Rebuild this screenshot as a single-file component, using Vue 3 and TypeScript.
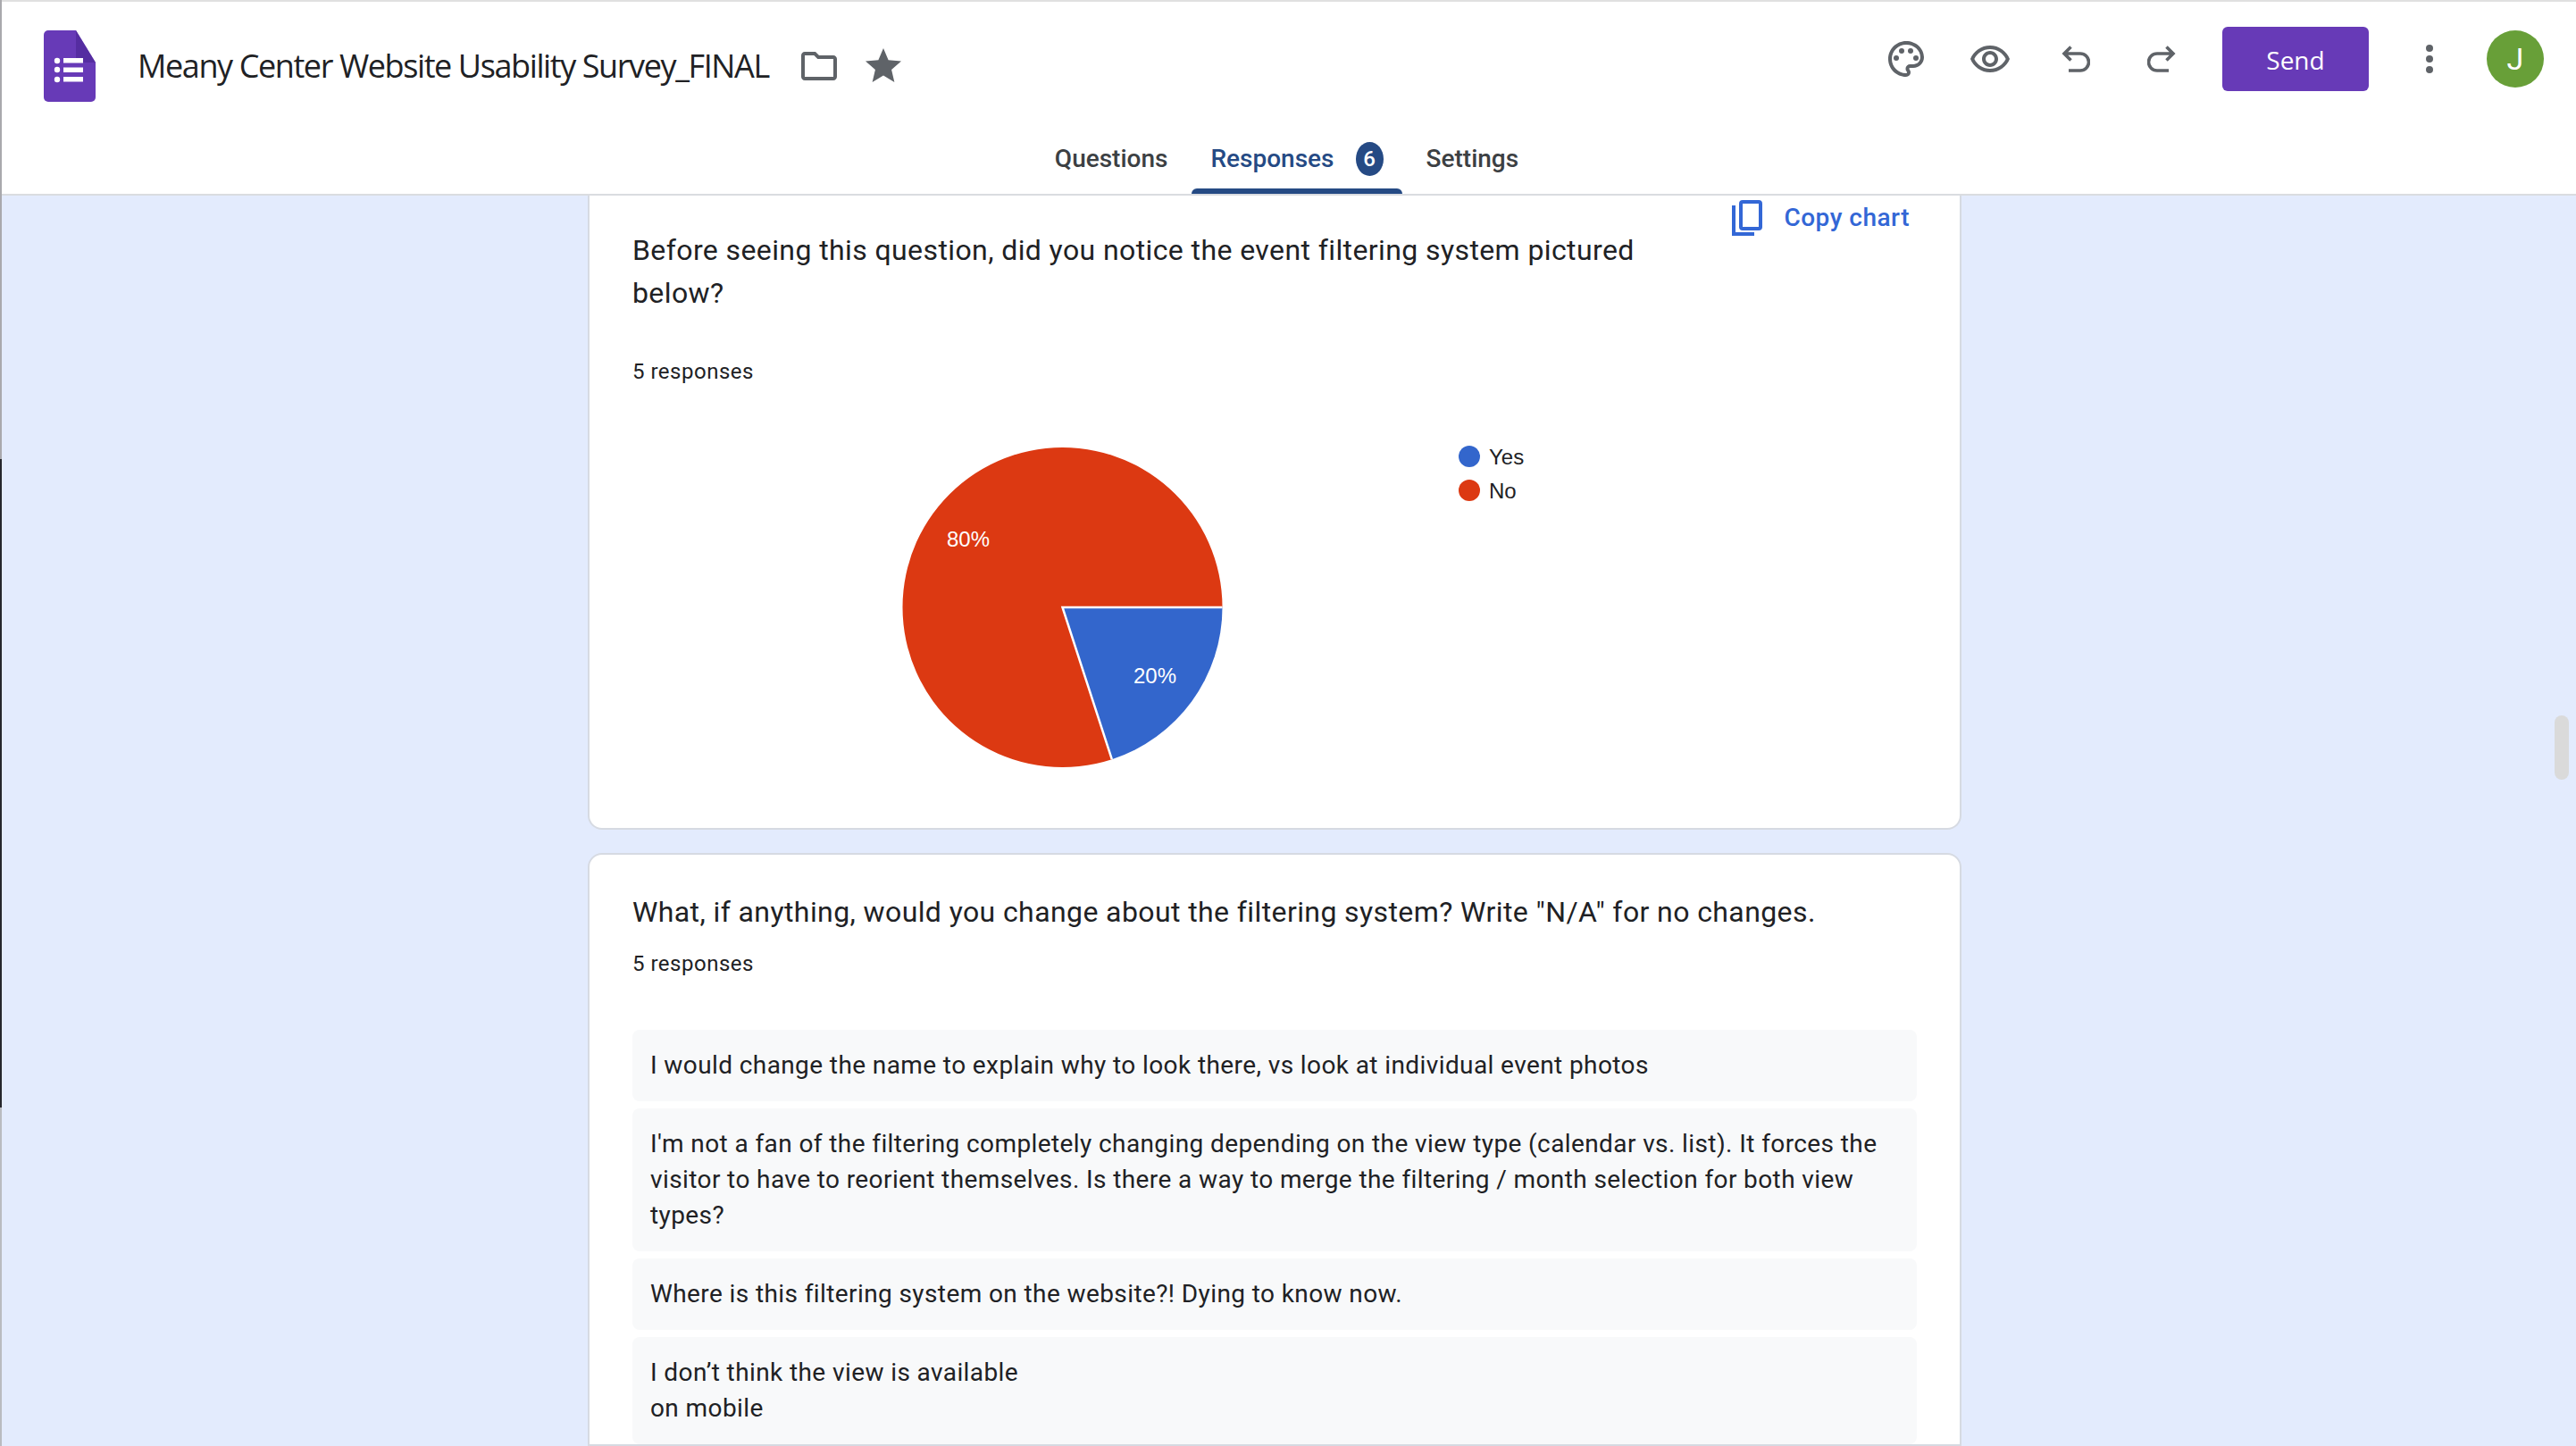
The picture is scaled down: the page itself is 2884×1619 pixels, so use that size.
<script setup lang="ts">
const answers: string[] = [
  'I would change the name to explain why to look there, vs look at individual event photos',
  "I'm not a fan of the filtering completely changing depending on the view type (calendar vs. list). It forces the visitor to have to reorient themselves. Is there a way to merge the filtering / month selection for both view types?",
  'Where is this filtering system on the website?! Dying to know now.',
  'I don’t think the view is available\non mobile',
]
</script>

<template>
  <div class="page">
    <header class="header">
      <div class="top">
        <div class="brand">
          <svg class="logo" viewBox="0 0 58 80">
            <path d="M5 0H36L58 36V75a5 5 0 0 1-5 5H5a5 5 0 0 1-5-5V5a5 5 0 0 1 5-5z" fill="#673ab7" />
            <path d="M36 0L58 36H41a5 5 0 0 1-5-5z" fill="#4f2a99" opacity=".75" />
            <circle cx="15" cy="34" r="3.2" fill="#fff" />
            <circle cx="15" cy="44" r="3.2" fill="#fff" />
            <circle cx="15" cy="55" r="3.2" fill="#fff" />
            <rect x="22" y="31" width="22" height="5.5" fill="#fff" />
            <rect x="22" y="41.5" width="22" height="5.5" fill="#fff" />
            <rect x="22" y="52" width="22" height="5.5" fill="#fff" />
          </svg>
          <h1 class="title">Meany Center Website Usability Survey_FINAL</h1>
          <svg class="folder" viewBox="0 0 24 24" fill="#5f6368">
            <path d="M9.17 6l2 2H20v10H4V6h5.17M10 4H4c-1.1 0-2 .9-2 2v12c0 1.1.9 2 2 2h16c1.1 0 2-.9 2-2V8c0-1.1-.9-2-2-2h-8l-2-2z" />
          </svg>
          <svg class="star" viewBox="0 0 24 24" fill="#5f6368">
            <path d="M12 17.27L18.18 21l-1.64-7.03L22 9.24l-7.19-.61L12 2 9.19 8.63 2 9.24l5.46 4.73L5.82 21z" />
          </svg>
        </div>
        <div class="actions">
          <svg class="ico palette" viewBox="0 0 24 24" fill="#5f6368">
            <path d="M12 22C6.49 22 2 17.51 2 12S6.49 2 12 2s10 4.04 10 9c0 3.31-2.69 6-6 6h-1.77c-.28 0-.5.22-.5.5 0 .12.05.23.13.33.41.47.64 1.06.64 1.67A2.5 2.5 0 0 1 12 22zm0-18c-4.41 0-8 3.59-8 8s3.59 8 8 8c.28 0 .5-.22.5-.5a.54.54 0 0 0-.14-.35c-.41-.46-.63-1.05-.63-1.65a2.5 2.5 0 0 1 2.5-2.5H16c2.21 0 4-1.79 4-4 0-3.86-3.59-7-8-7z" />
            <circle cx="6.5" cy="11.5" r="1.5" />
            <circle cx="9.5" cy="7.5" r="1.5" />
            <circle cx="14.5" cy="7.5" r="1.5" />
            <circle cx="17.5" cy="11.5" r="1.5" />
          </svg>
          <svg class="ico eye" viewBox="0 0 24 24" fill="#5f6368">
            <path d="M12 6.5c3.79 0 7.17 2.13 8.82 5.5-1.65 3.37-5.02 5.5-8.82 5.5S4.83 15.37 3.18 12C4.83 8.63 8.21 6.5 12 6.5m0-2C7 4.5 2.73 7.61 1 12c1.73 4.39 6 7.5 11 7.5s9.27-3.11 11-7.5c-1.73-4.39-6-7.5-11-7.5zm0 5a2.5 2.5 0 0 1 0 5 2.5 2.5 0 0 1 0-5m0-2c-2.48 0-4.5 2.02-4.5 4.5s2.02 4.5 4.5 4.5 4.5-2.02 4.5-4.5-2.02-4.5-4.5-4.5z" />
          </svg>
          <svg class="ico undo" viewBox="0 0 32 30" fill="none" stroke="#5f6368" stroke-width="3.6">
            <path d="M10.5 1.5L3 9l7.5 7.5M3 9h18a9 9 0 0 1 0 19H8" />
          </svg>
          <svg class="ico redo" viewBox="0 0 32 30" fill="none" stroke="#5f6368" stroke-width="3.6">
            <path d="M21.5 1.5L29 9l-7.5 7.5M29 9H11a9 9 0 0 0 0 19h13" />
          </svg>
          <button class="send">Send</button>
          <svg class="kebab" viewBox="0 0 8 32" fill="#5f6368">
            <circle cx="4" cy="4" r="4" />
            <circle cx="4" cy="16" r="4" />
            <circle cx="4" cy="28" r="4" />
          </svg>
          <div class="avatar">J</div>
        </div>
      </div>
      <nav class="tabs">
        <div class="tab">Questions</div>
        <div class="tab active">Responses<span class="badge">6</span></div>
        <div class="tab">Settings</div>
      </nav>
    </header>

    <main class="main">
      <div class="column">
        <section class="card first">
          <div class="q-row">
            <p class="question wrap">Before seeing this question, did you notice the event filtering system pictured below?</p>
            <div class="copy">
              <svg class="copy-ico" viewBox="0 0 34 40" fill="none" stroke="#3367d6" stroke-width="4">
                <rect x="10" y="2" width="22" height="30" rx="2" />
                <path d="M2 6V38H25" />
              </svg>
              <span>Copy chart</span>
            </div>
          </div>
          <p class="count pie-count">5 responses</p>
          <svg class="chart" viewBox="708 470 1440 410" width="1440" height="410">
            <path d="M1189.5 680L1368.5 680A179 179 0 0 1 1244.8 850.2Z" fill="#3366cc" />
            <path d="M1189.5 680L1244.8 850.2A179 179 0 1 1 1368.5 680Z" fill="#dc3912" />
            <path d="M1368.5 680H1189.5L1244.8 850.2" fill="none" stroke="#fff" stroke-width="2.5" />
            <text x="1084" y="612" class="pct" text-anchor="middle">80%</text>
            <text x="1293" y="765" class="pct" text-anchor="middle">20%</text>
            <circle cx="1645" cy="511" r="12" fill="#3366cc" />
            <text x="1667" y="520" class="legend">Yes</text>
            <circle cx="1645" cy="549" r="12" fill="#dc3912" />
            <text x="1667" y="558" class="legend">No</text>
          </svg>
        </section>

        <section class="card second">
          <p class="question">What, if anything, would you change about the filtering system? Write "N/A" for no changes.</p>
          <p class="count answers-count">5 responses</p>
          <div class="answers">
            <div v-for="(a, i) in answers" :key="i" class="answer">{{ a }}</div>
          </div>
        </section>
      </div>
    </main>

    <div class="edge">
      <i class="e1"></i>
      <i class="e2"></i>
      <i class="e3"></i>
    </div>
    <div class="thumb"></div>
  </div>
</template>

<style>
html, body { margin: 0; background: #e3ebfd; }
</style>

<style scoped>
.page {
  position: relative;
  width: 2884px;
  height: 1619px;
  overflow: hidden;
  background: #e3ebfd;
  font-family: Roboto, "Liberation Sans", sans-serif;
  color: #202124;
}
.header {
  box-sizing: border-box;
  height: 219px;
  background: #fff;
  border-top: 2px solid #e0e0e0;
  margin-top: 0;
  border-bottom: 2px solid #dadce0;
  box-shadow: inset 0 2px 0 #fff;
}
.top {
  height: 136px;
  display: flex;
  justify-content: space-between;
  align-items: flex-start;
}
.brand {
  display: flex;
  align-items: center;
  padding: 32px 0 0 49px;
}
.logo { width: 58px; height: 80px; flex: none; }
.title {
  margin: 0 0 0 47px;
  font: 400 36px/44px "Open Sans", Roboto, sans-serif;
  letter-spacing: -1.4px;
  color: #202124;
}
.folder { width: 48px; height: 48px; margin-left: 32px; }
.star { width: 48px; height: 48px; margin-left: 24px; }
.actions {
  display: flex;
  align-items: center;
  padding: 28px 36px 0 0;
}
.ico { flex: none; }
.palette { width: 48px; height: 48px; }
.eye { width: 48px; height: 48px; margin-left: 46px; }
.undo { width: 32px; height: 30px; margin-left: 56px; }
.redo { width: 32px; height: 30px; margin-left: 64px; }
.send {
  width: 164px;
  height: 72px;
  margin-left: 52px;
  border: 0;
  border-radius: 6px;
  background: #673ab7;
  color: #fff;
  font: 500 28px/72px "Open Sans", Roboto, sans-serif;
}
.kebab { width: 8px; height: 32px; margin-left: 64px; }
.avatar {
  width: 64px;
  height: 64px;
  margin-left: 60px;
  border-radius: 50%;
  background: #689f38;
  color: #fff;
  text-align: center;
  font: 400 34px/64px Roboto, sans-serif;
}
.tabs {
  display: flex;
  justify-content: center;
  gap: 6px;
  height: 79px;
  padding-right: 3px;
}
.tab {
  position: relative;
  box-sizing: border-box;
  height: 79px;
  padding: 0 21px;
  display: flex;
  align-items: center;
  font: 500 28px/40px Roboto, sans-serif;
  color: #3c4043;
}
.tab.active { color: #254a84; }
.tab.active::after {
  content: "";
  position: absolute;
  left: 0;
  right: 0;
  bottom: 0;
  height: 6px;
  border-radius: 6px 6px 0 0;
  background: #254a84;
}
.badge {
  width: 31px;
  height: 38px;
  margin-left: 24px;
  border-radius: 50%;
  background: #254a84;
  color: #fff;
  text-align: center;
  font: 500 24px/38px Roboto, sans-serif;
}
.main {
  display: flex;
  justify-content: center;
  padding-right: 30px;
}
.column {
  width: 1538px;
  display: flex;
  flex-direction: column;
  gap: 26px;
}
.card {
  box-sizing: border-box;
  background: #fff;
  border: 2px solid #d6dae2;
}
.card.first {
  height: 710px;
  border-top: 0;
  border-radius: 0 0 16px 16px;
  padding: 0 0 0 48px;
}
.card.second {
  border-radius: 16px 16px 0 0;
  padding: 40px 48px 0;
}
.q-row {
  display: flex;
  justify-content: space-between;
  align-items: flex-start;
}
.question {
  margin: 0;
  font-size: 32px;
  line-height: 48px;
  letter-spacing: .4px;
  color: #202124;
}
.question.wrap { width: 1180px; margin-top: 37px; }
.copy {
  display: flex;
  align-items: center;
  margin: 5px 56px 0 0;
  color: #3367d6;
  font: 500 28px/40px Roboto, sans-serif;
  letter-spacing: .5px;
}
.copy-ico { width: 34px; height: 40px; margin-right: 24px; }
.count {
  margin: 0;
  font-size: 24px;
  line-height: 28px;
  letter-spacing: .5px;
  color: #202124;
}
.pie-count { margin-top: 50px; }
.chart { display: block; margin-top: 40px; }
.pct { font: 500 24px "Liberation Sans", Arial, sans-serif; fill: #fff; }
.legend { font: 400 24px "Liberation Sans", Arial, sans-serif; fill: #202124; }
.answers-count { margin-top: 20px; }
.answers {
  display: flex;
  flex-direction: column;
  gap: 8px;
  margin-top: 60px;
}
.answer {
  background: #f8f9fa;
  border-radius: 8px;
  padding: 20px;
  font-size: 28px;
  line-height: 40px;
  letter-spacing: .4px;
  white-space: pre-line;
}
.edge {
  position: absolute;
  left: 0;
  top: 0;
  bottom: 0;
  width: 2px;
  display: flex;
  flex-direction: column;
}
.edge i { display: block; }
.e1 { height: 514px; background: #a9a9ad; }
.e2 { height: 726px; background: #26262c; }
.e3 { flex: 1; background: #b9bbc0; }
.thumb {
  position: absolute;
  left: 2860px;
  top: 801px;
  width: 16px;
  height: 72px;
  border-radius: 8px;
  background: #dadada;
}
</style>
